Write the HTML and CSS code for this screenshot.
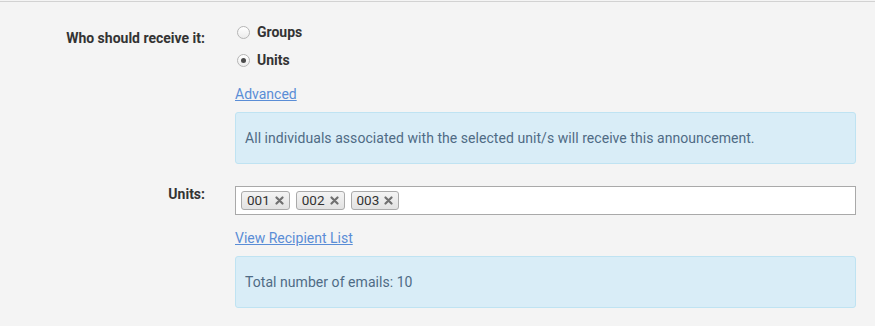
FILE: index.html
```html
<!DOCTYPE html>
<html lang="en">
<head>
    <meta charset="UTF-8">
    <title>Announcement Recipients</title>
    <link rel="stylesheet" href="styles.css">
</head>
<body>
    <div class="page">
        <form class="recipients">
            <div class="form-row">
                <label class="row-label">Who should receive it:</label>
                <div class="row-field">
                    <div class="radio-list">
                        <label class="radio">
                            <span class="radio-dot"></span>
                            <span>Groups</span>
                        </label>
                        <label class="radio">
                            <span class="radio-dot checked"></span>
                            <span>Units</span>
                        </label>
                    </div>
                    <a href="#" class="link link-advanced">Advanced</a>
                    <div class="info-box">
                        All individuals associated with the selected unit/s will receive this announcement.
                    </div>
                </div>
            </div>

            <div class="form-row row-units">
                <label class="row-label label-units">Units:</label>
                <div class="row-field">
                    <div class="tag-input">
                        <span class="tag">001<svg class="tag-remove" viewBox="0 0 9 9"><path d="M1.5 1.5 L7.5 7.5 M7.5 1.5 L1.5 7.5"/></svg></span>
                        <span class="tag">002<svg class="tag-remove" viewBox="0 0 9 9"><path d="M1.5 1.5 L7.5 7.5 M7.5 1.5 L1.5 7.5"/></svg></span>
                        <span class="tag">003<svg class="tag-remove" viewBox="0 0 9 9"><path d="M1.5 1.5 L7.5 7.5 M7.5 1.5 L1.5 7.5"/></svg></span>
                    </div>
                    <a href="#" class="link link-recipients">View Recipient List</a>
                    <div class="info-box">
                        Total number of emails: 10
                    </div>
                </div>
            </div>
        </form>
    </div>
</body>
</html>
```

FILE: styles.css
```css
* {
    box-sizing: border-box;
    margin: 0;
    padding: 0;
}

body {
    font-family: Roboto, sans-serif;
    font-size: 14px;
    line-height: 20px;
    background-color: #f4f4f4;
    color: #333333;
    padding-top: 1px;
}

.page {
    border-top: 1px solid #d2d2d2;
    min-height: 325px;
}

.recipients {
    padding-top: 20px;
}

.form-row {
    display: grid;
    grid-template-columns: 205px 621px;
    column-gap: 30px;
}

.row-units {
    margin-top: 22px;
}

.row-label {
    text-align: right;
    font-weight: 700;
    padding-top: 6px;
}

.label-units {
    padding-top: 0;
    line-height: 17px;
}

.radio-list {
    display: flex;
    flex-direction: column;
    gap: 8px;
}

.radio {
    display: flex;
    align-items: center;
    font-weight: 700;
}

.radio-dot {
    width: 13px;
    height: 13px;
    border-radius: 50%;
    border: 1px solid #b5b5b5;
    background: linear-gradient(#ffffff, #ececec);
    margin-left: 2px;
    margin-right: 7px;
    display: flex;
    align-items: center;
    justify-content: center;
}

.radio-dot.checked::after {
    content: "";
    width: 5px;
    height: 5px;
    border-radius: 50%;
    background-color: #4a4a4a;
}

.link {
    display: block;
    width: max-content;
    color: #5a8dd6;
    text-decoration: underline;
}

.link-advanced {
    margin-top: 14px;
}

.link-recipients {
    margin-top: 13px;
}

.info-box {
    margin-top: 8px;
    background-color: #d9edf7;
    border: 1px solid #bfe3f2;
    border-radius: 3px;
    padding: 15px 9px 15px 9px;
    color: #4f6b85;
    letter-spacing: 0.05px;
}

.tag-input {
    display: flex;
    gap: 6px;
    height: 29px;
    border: 1px solid #a9a9a9;
    background-color: #ffffff;
    padding: 4px 5px;
}

.tag {
    display: flex;
    align-items: center;
    height: 19px;
    padding: 0 5px;
    border: 1px solid #aaaaaa;
    border-radius: 3px;
    background: linear-gradient(#f4f4f4, #e2e2e2);
    color: #333333;
    font-size: 13.5px;
    line-height: 17px;
}

.tag-remove {
    width: 9px;
    height: 9px;
    margin-left: 5px;
    stroke: #707070;
    stroke-width: 2.2;
    stroke-linecap: round;
    fill: none;
}
```
